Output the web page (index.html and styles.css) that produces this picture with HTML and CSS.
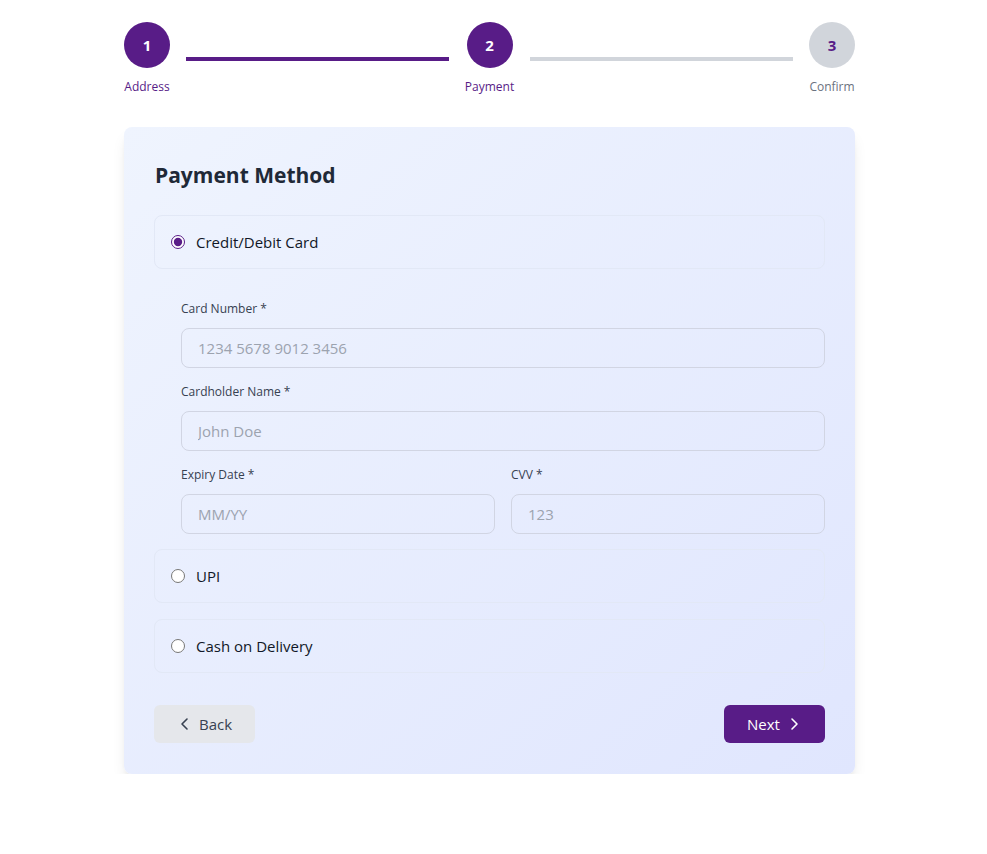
FILE: index.html
```html
<!DOCTYPE html>
<html>
<head>
<meta charset="utf-8">
<link rel="stylesheet" href="styles.css">
</head>
<body>
<div class="wrap">
  <div class="stepper">
    <div class="step done">
      <div class="circle">1</div>
      <div class="step-label">Address</div>
    </div>
    <div class="line active"></div>
    <div class="step done">
      <div class="circle">2</div>
      <div class="step-label">Payment</div>
    </div>
    <div class="line"></div>
    <div class="step todo">
      <div class="circle">3</div>
      <div class="step-label">Confirm</div>
    </div>
  </div>

  <div class="card">
    <h2 class="title">Payment Method</h2>

    <label class="option">
      <input type="radio" name="pm" checked>
      <span>Credit/Debit Card</span>
    </label>

    <div class="card-form">
      <div class="field">
        <label class="flabel">Card Number *</label>
        <input class="input" type="text" placeholder="1234 5678 9012 3456">
      </div>
      <div class="field">
        <label class="flabel">Cardholder Name *</label>
        <input class="input" type="text" placeholder="John Doe">
      </div>
      <div class="row">
        <div class="field">
          <label class="flabel">Expiry Date *</label>
          <input class="input" type="text" placeholder="MM/YY">
        </div>
        <div class="field">
          <label class="flabel">CVV *</label>
          <input class="input" type="text" placeholder="123">
        </div>
      </div>
    </div>

    <label class="option">
      <input type="radio" name="pm">
      <span>UPI</span>
    </label>
    <label class="option">
      <input type="radio" name="pm">
      <span>Cash on Delivery</span>
    </label>

    <div class="actions">
      <button class="btn back">
        <svg width="16" height="16" viewBox="0 0 16 16"><path d="M10 3 L5 8 L10 13" fill="none" stroke="currentColor" stroke-width="1.6" stroke-linecap="round" stroke-linejoin="round"/></svg>
        Back
      </button>
      <button class="btn next">
        Next
        <svg width="16" height="16" viewBox="0 0 16 16"><path d="M6 3 L11 8 L6 13" fill="none" stroke="currentColor" stroke-width="1.6" stroke-linecap="round" stroke-linejoin="round"/></svg>
      </button>
    </div>
  </div>
</div>
</body>
</html>
```
FILE: styles.css
```css
* { box-sizing: border-box; }
html, body { margin: 0; background: #ffffff; }
body {
  font-family: "Open Sans", "Noto Sans", sans-serif;
  color: #1f2937;
}
.wrap {
  width: 731px;
  margin: 0 0 0 124px;
  padding-top: 22px;
}
.stepper {
  display: flex;
  align-items: center;
}
.step {
  display: flex;
  flex-direction: column;
  align-items: center;
}
.circle {
  width: 46px;
  height: 46px;
  border-radius: 50%;
  display: flex;
  align-items: center;
  justify-content: center;
  font-weight: 700;
  font-size: 15px;
}
.done .circle { background: #581c87; color: #fff; }
.todo .circle { background: #d1d5db; color: #581c87; }
.step-label {
  margin-top: 11px;
  font-size: 12px;
  line-height: 16px;
}
.done .step-label { color: #581c87; }
.todo .step-label { color: #6b7280; }
.line {
  flex: 1;
  height: 4px;
  margin: 0 16px;
  background: #d1d5db;
}
.line.active { background: #581c87; }

.card {
  margin-top: 32px;
  border-radius: 8px;
  background: linear-gradient(to bottom right, #eff4fe, #e0e6fe);
  box-shadow: 0 10px 15px -3px rgba(0,0,0,0.1), 0 4px 6px -4px rgba(0,0,0,0.1);
  padding: 30px 30px 31px 30px;
}
.title {
  margin: 4px 0 26px 1px;
  font-size: 21px;
  font-weight: 700;
  line-height: 28px;
  color: #1f2937;
}
.option {
  display: flex;
  align-items: center;
  height: 54px;
  padding: 0 16px;
  border: 1px solid #e2e8f6;
  border-radius: 8px;
  font-size: 15px;
  color: #111827;
  margin-bottom: 16px;
}
.option input {
  margin: 0 11px 0 0;
  width: 14px;
  height: 14px;
  accent-color: #581c87;
}
.card-form {
  padding: 16px 0 0 27px;
  margin-bottom: 15px;
}
.field {
  display: flex;
  flex-direction: column;
  margin-bottom: 16px;
}
.row .field { margin-bottom: 0; flex: 1; }
.row {
  display: flex;
  gap: 16px;
}
.flabel {
  font-size: 12px;
  line-height: 16px;
  color: #374151;
  margin-bottom: 11px;
}
.input {
  height: 40px;
  border: 1px solid #d1d5e3;
  border-radius: 8px;
  background: transparent;
  padding: 0 16px;
  font-family: inherit;
  font-size: 15px;
  color: #111827;
  outline: none;
}
.input::placeholder { color: #9ca3af; }
.actions {
  display: flex;
  justify-content: space-between;
  margin-top: 32px;
}
.btn {
  display: flex;
  align-items: center;
  justify-content: center;
  gap: 6px;
  height: 38px;
  width: 101px;
  border: none;
  border-radius: 6px;
  font-family: inherit;
  font-size: 15px;
  cursor: pointer;
}
.back { background: #e5e7eb; color: #374151; }
.next { background: #581c87; color: #fff; }
```
